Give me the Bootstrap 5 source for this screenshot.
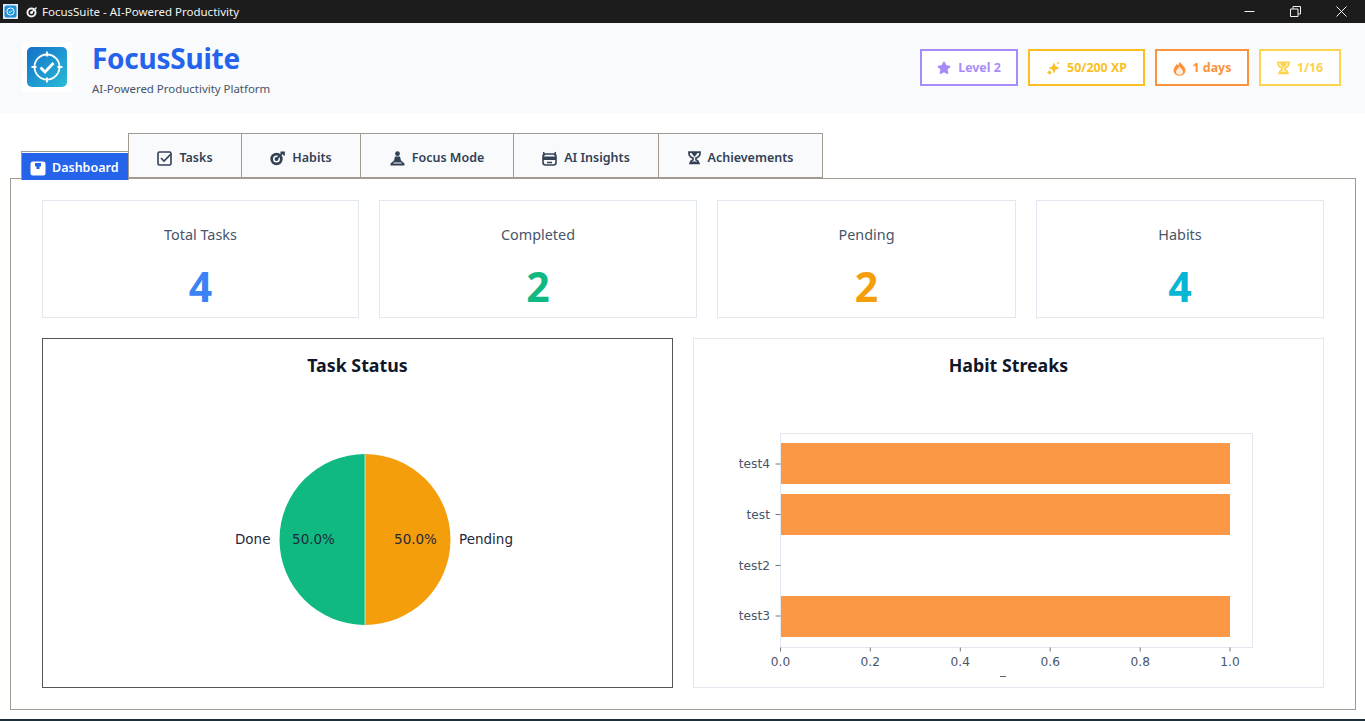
<!DOCTYPE html>
<html>
<head>
  <meta charset="utf-8">
  <title>FocusSuite - AI-Powered Productivity</title>
  <link href="https://cdn.jsdelivr.net/npm/bootstrap@5.3.2/dist/css/bootstrap.min.css" rel="stylesheet">
  <style>
    html, body { height: 721px; overflow: hidden; background: #fff; }
    body { font-family: "Noto Sans", "Open Sans", sans-serif; color: #1e293b; }
    .win-bar { height: 23px; background: #1c1c1c; color: #f2f2f2; font-size: 11.5px; padding-left: 3px; }
    .win-bar .win-title { margin-left: 4px; }
    .win-bar .win-btns { gap: 35px; padding-right: 18px; }
    .app-head { height: 90px; background: #f8fafc; padding: 0 24px 0 22px; }
    .logo-box { width: 50px; height: 50px; background: #fff; padding: 5px; margin-right: 21px; margin-top: -2px; }
    .app-name { font-size: 28px; font-weight: 700; color: #2563eb; line-height: 36px; letter-spacing: -.25px; margin: 1px 0 0 -1px; }
    .app-sub { font-size: 11.45px; color: #475569; line-height: 16px; margin: 5px 0 0 -1px; }
    .pill-row { column-gap: 10px; margin-top: -2px; }
    .stat-pill { height: 37px; border: 2px solid; background: #fff; font-size: 12.4px; font-weight: 700; gap: 7px; padding-top: 2px; }
    .pill-level { width: 98px; border-color: #a78bfa; color: #a78bfa; }
    .pill-xp { width: 117px; border-color: #fbbf24; color: #fbbf24; }
    .pill-streak { width: 94px; border-color: #fb923c; color: #fb923c; }
    .pill-ach { width: 82px; border-color: #fcd34d; color: #fcd34d; }
    .tab-row { margin: 20px 0 0 21px; height: 45px; position: relative; z-index: 2; }
    .tab-item { height: 45px; background: #f8fafc; border: 1px solid #a09a90; color: #334155; font-size: 12.5px; font-weight: 600; gap: 7px; margin-right: -1px; padding-top: 5px; }
    .tab-dash { height: 29px; background: #2563eb; color: #fff; border-bottom: 0; margin-bottom: -2px; width: 108px; padding: 4px 0 0 8px; justify-content: flex-start !important; gap: 6px; box-shadow: inset 0 1px 0 #fff; }
    .main-pane { margin: 0 9px 0 10px; height: 532px; border: 1px solid #a09a90; padding: 21px 31px; }
    .stat-grid { display: grid; grid-template-columns: 317px 318px 299px 288px; gap: 20px; }
    .stat-box { height: 118px; border: 1px solid #e2e8f0; text-align: center; }
    .stat-label { font-size: 14.4px; color: #475569; margin-top: 24px; line-height: 20px; }
    .stat-num { font-size: 41px; font-weight: 700; line-height: 50px; margin-top: 16px; }
    .chart-grid { display: grid; grid-template-columns: 631px 631px; gap: 20px; margin-top: 20px; }
    .chart-box { height: 350px; border: 1px solid #e2e8f0; overflow: hidden; }
    .chart-focus { border-color: #555; }
    .chart-title { font-size: 17.8px; font-weight: 700; color: #0f172a; text-align: center; line-height: 24px; height: 52px; padding-top: 14px; margin: 0; }
    .chart-box svg { display: block; }
    .chart-box text { font-family: "DejaVu Sans", sans-serif; }
    .win-edge { height: 2px; margin-top: 9px; background: #1f2f3a; }
  </style>
</head>
<body>
  <div class="win-bar d-flex align-items-center">
    <svg width="15" height="15" viewBox="0 0 15 15"><rect width="15" height="15" fill="#dfeaf5"/><rect x="1.500" y="1.500" width="12" height="12" rx="2" fill="#1f8fd6"/><circle cx="7.500" cy="7.500" r="3.600" fill="none" stroke="#fff"/><path d="M5.800 7.500l1.200 1.200 2.200-2.300" fill="none" stroke="#fff"/></svg>
    <svg class="ms-2" width="12" height="12" viewBox="0 0 12 12"><circle cx="5.500" cy="6.500" r="5" fill="#f2f2f2"/><circle cx="5.500" cy="6.500" r="3" fill="#1c1c1c"/><circle cx="5.500" cy="6.500" r="1.500" fill="#f2f2f2"/><path d="M5.500 6.500L10.500 1.500" stroke="#f2f2f2" stroke-width="1.500"/></svg>
    <span class="win-title">FocusSuite - AI-Powered Productivity</span>
    <div class="win-btns d-flex align-items-center ms-auto">
      <svg width="11" height="11" viewBox="0 0 11 11"><path d="M0.500 5.500h10" stroke="#f2f2f2"/></svg>
      <svg width="11" height="11" viewBox="0 0 11 11"><path d="M0.500 3h7.500v7.500h-7.500zM3 3V0.500h7.500V8H8" fill="none" stroke="#f2f2f2"/></svg>
      <svg width="11" height="11" viewBox="0 0 11 11"><path d="M0.500 0.500l10 10M10.500 0.500l-10 10" stroke="#f2f2f2"/></svg>
    </div>
  </div>

  <header class="app-head d-flex align-items-center">
    <div class="logo-box flex-shrink-0">
      <svg width="40" height="40" viewBox="0 0 40 40">
        <defs><linearGradient id="logoGrad" x1="0" y1="0" x2="1" y2="1"><stop offset="0" stop-color="#1470c8"/><stop offset="1" stop-color="#28bcd8"/></linearGradient></defs>
        <rect width="40" height="40" rx="5" fill="url(#logoGrad)"/>
        <circle cx="20" cy="20" r="12.500" fill="none" stroke="#fff" stroke-width="1.800"/>
        <path d="M20 4.500v5M20 30.500v5M4.500 20h5M30.500 20h5" stroke="#fff" stroke-width="1.800"/>
        <path d="M13.500 20.500l4.500 4.500 8.500-9" fill="none" stroke="#fff" stroke-width="2.800"/>
      </svg>
    </div>
    <div>
      <h1 class="app-name">FocusSuite</h1>
      <div class="app-sub">AI-Powered Productivity Platform</div>
    </div>
    <div class="pill-row d-flex ms-auto">
      <div class="stat-pill pill-level d-flex align-items-center justify-content-center">
        <svg width="14" height="14" viewBox="0 0 14 14"><path d="M7 1.500l1.700 3.500 3.800.6-2.800 2.600.7 3.900L7 10.300l-3.400 1.800.7-3.900L1.500 5.600l3.800-.6z" fill="currentColor" stroke="currentColor" stroke-width="1.800" stroke-linejoin="round"/></svg>
        <span>Level 2</span>
      </div>
      <div class="stat-pill pill-xp d-flex align-items-center justify-content-center">
        <svg width="14" height="14" viewBox="0 0 14 14"><path d="M8 2.500l1.300 3.200 3.200 1.300-3.200 1.300L8 11.500 6.700 8.300 3.500 7l3.200-1.300z" fill="currentColor" stroke="currentColor" stroke-linejoin="round"/><path d="M3.500 9.500l.8 1.200 1.200.8-1.200.8-.8 1.200-.8-1.200-1.200-.8 1.200-.8zM12 .8v2.400M10.800 2h2.400" fill="currentColor" stroke="currentColor" stroke-width=".8"/></svg>
        <span>50/200 XP</span>
      </div>
      <div class="stat-pill pill-streak d-flex align-items-center justify-content-center">
        <svg width="13" height="15" viewBox="0 0 13 15"><path d="M6.500 0.500C7.500 2.800 12.500 5.500 12.500 9.500a6 5.200 0 0 1-12 0C.5 6.500 3 5 3.500 3c.8.4 1.300 1 1.500 1.600C5.800 3.500 6.300 2 6.500.5z" fill="currentColor"/><path d="M6.500 5.500C7.300 7.200 10 8.600 10 10.800a3.500 3 0 0 1-7 0C3 8.600 5.700 7.200 6.500 5.500z" fill="#fff" fill-opacity=".85"/></svg>
        <span>1 days</span>
      </div>
      <div class="stat-pill pill-ach d-flex align-items-center justify-content-center">
        <svg width="13" height="14" viewBox="0 0 13 14"><path d="M1 1.200h11v1.500c0 2-2.200 4-4 4.300v1.800c1.500.5 2.500 1.800 3 3.700H2c.5-1.900 1.500-3.200 3-3.700V7C3.200 6.700 1 4.700 1 2.700z" fill="currentColor" fill-opacity=".35" stroke="currentColor" stroke-width="1.600"/><path d="M3.500 1.500h6c0 2.500-1.500 4.500-3 4.500s-3-2-3-4.500zM2.500 11h8v2h-8z" fill="currentColor"/></svg>
        <span>1/16</span>
      </div>
    </div>
  </header>

  <nav class="tab-row d-flex align-items-end">
    <div class="tab-item tab-dash d-flex align-items-center">
      <svg width="16" height="15" viewBox="0 0 16 15"><rect x=".5" y=".5" width="15" height="14" rx="2.500" fill="#fff"/><path d="M5 2h6v3.500H9.500V8h-3V5.500H5z" fill="#2563eb"/></svg>
      <span>Dashboard</span>
    </div>
    <div class="tab-item d-flex align-items-center justify-content-center" style="width:114px">
      <svg width="15" height="15" viewBox="0 0 15 15"><rect x="1" y="1" width="13" height="13" rx="1.500" fill="none" stroke="currentColor" stroke-width="1.600"/><path d="M4 7l3 3 7-7" fill="none" stroke="currentColor" stroke-width="1.600"/></svg>
      <span>Tasks</span>
    </div>
    <div class="tab-item d-flex align-items-center justify-content-center" style="width:120px">
      <svg width="15" height="15" viewBox="0 0 15 15"><circle cx="6.500" cy="8" r="6.200" fill="currentColor"/><circle cx="6.500" cy="8" r="3.500" fill="#f8fafc"/><circle cx="6.500" cy="8" r="1.900" fill="currentColor"/><path d="M6.500 8L13 1.500M10.500 1.500h3.500v3" fill="none" stroke="currentColor" stroke-width="1.800"/></svg>
      <span>Habits</span>
    </div>
    <div class="tab-item d-flex align-items-center justify-content-center" style="width:154px">
      <svg width="15" height="15" viewBox="0 0 15 15"><circle cx="7.500" cy="2.700" r="2.400" fill="currentColor"/><path d="M5 5.500h5l1 4 3.500 3v2H.5v-2l3.500-3z" fill="currentColor"/><path d="M3.500 12h8" stroke="#f8fafc"/></svg>
      <span>Focus Mode</span>
    </div>
    <div class="tab-item d-flex align-items-center justify-content-center" style="width:146px">
      <svg width="15" height="15" viewBox="0 0 15 15"><path d="M2.500 4.500L1.500 1M12.500 4.500L13.500 1" stroke="currentColor" stroke-width="1.500"/><rect x="1" y="3" width="13" height="11" rx="2.500" fill="none" stroke="currentColor" stroke-width="1.600"/><rect x="1" y="5.500" width="13" height="3.500" fill="currentColor"/><path d="M5 11.500h5" stroke="currentColor" stroke-width="1.500"/></svg>
      <span>AI Insights</span>
    </div>
    <div class="tab-item d-flex align-items-center justify-content-center" style="width:165px;margin-right:0">
      <svg width="13" height="14" viewBox="0 0 13 14"><path d="M1 1.200h11v1.500c0 2-2.200 4-4 4.300v1.800c1.500.5 2.500 1.800 3 3.700H2c.5-1.900 1.500-3.200 3-3.700V7C3.200 6.700 1 4.700 1 2.700z" fill="none" stroke="currentColor" stroke-width="1.700"/><path d="M2 13h9v-2.500H2zM3.500 2h6L6.500 6z" fill="currentColor"/></svg>
      <span>Achievements</span>
    </div>
  </nav>

  <main class="main-pane">
    <div class="stat-grid">
      <div class="stat-box">
        <div class="stat-label">Total Tasks</div>
        <div class="stat-num" style="color:#3b82f6">4</div>
      </div>
      <div class="stat-box">
        <div class="stat-label">Completed</div>
        <div class="stat-num" style="color:#10b981">2</div>
      </div>
      <div class="stat-box">
        <div class="stat-label">Pending</div>
        <div class="stat-num" style="color:#f59e0b">2</div>
      </div>
      <div class="stat-box">
        <div class="stat-label">Habits</div>
        <div class="stat-num" style="color:#06b6d4">4</div>
      </div>
    </div>
    <div class="chart-grid">
      <section class="chart-box chart-focus">
        <h2 class="chart-title">Task Status</h2>
        <svg width="629" height="296" viewBox="43 391 629 296">
          <path d="M365 539.500V454a85.500 85.500 0 0 0 0 171z" fill="#10b981"/>
          <path d="M365 539.500V454a85.500 85.500 0 0 1 0 171z" fill="#f59e0b"/>
          <path d="M365 454v171" stroke="#fff" stroke-width=".6"/>
          <g font-size="13.500" fill="#1e293b">
            <text x="270.500" y="544" text-anchor="end">Done</text>
            <text x="313.500" y="544" text-anchor="middle">50.0%</text>
            <text x="415.500" y="544" text-anchor="middle">50.0%</text>
            <text x="459" y="544">Pending</text>
          </g>
        </svg>
      </section>
      <section class="chart-box">
        <h2 class="chart-title">Habit Streaks</h2>
        <svg width="629" height="296" viewBox="694 391 629 296">
          <rect x="780.500" y="433.500" width="472" height="214" fill="#fff" stroke="#e2e8f0"/>
          <g fill="#fb923c" fill-opacity=".95">
            <rect x="781" y="443" width="449" height="41"/>
            <rect x="781" y="494" width="449" height="41"/>
            <rect x="781" y="596" width="449" height="41"/>
          </g>
          <path d="M775.500 464h5M775.500 514.500h5M775.500 565.500h5M775.500 616h5" stroke="#475569" stroke-width=".8"/>
          <path d="M780.500 647.500v4M870.300 647.500v4M960.300 647.500v4M1050.200 647.500v4M1140.200 647.500v4M1230 647.500v4" stroke="#475569" stroke-width=".8"/>
          <g font-size="12.200" fill="#475569">
            <text x="770" y="468" text-anchor="end">test4</text>
            <text x="770" y="518.500" text-anchor="end">test</text>
            <text x="770" y="569.500" text-anchor="end">test2</text>
            <text x="770" y="620" text-anchor="end">test3</text>
            <text x="780.500" y="665.500" text-anchor="middle">0.0</text>
            <text x="870.300" y="665.500" text-anchor="middle">0.2</text>
            <text x="960.300" y="665.500" text-anchor="middle">0.4</text>
            <text x="1050.200" y="665.500" text-anchor="middle">0.6</text>
            <text x="1140.200" y="665.500" text-anchor="middle">0.8</text>
            <text x="1230" y="665.500" text-anchor="middle">1.0</text>
          </g>
          <path d="M1000 676.500h6" stroke="#475569" stroke-width=".9"/>
        </svg>
      </section>
    </div>
  </main>
  <div class="win-edge"></div>
  <script src="https://cdn.jsdelivr.net/npm/bootstrap@5.3.2/dist/js/bootstrap.bundle.min.js"></script>
</body>
</html>
